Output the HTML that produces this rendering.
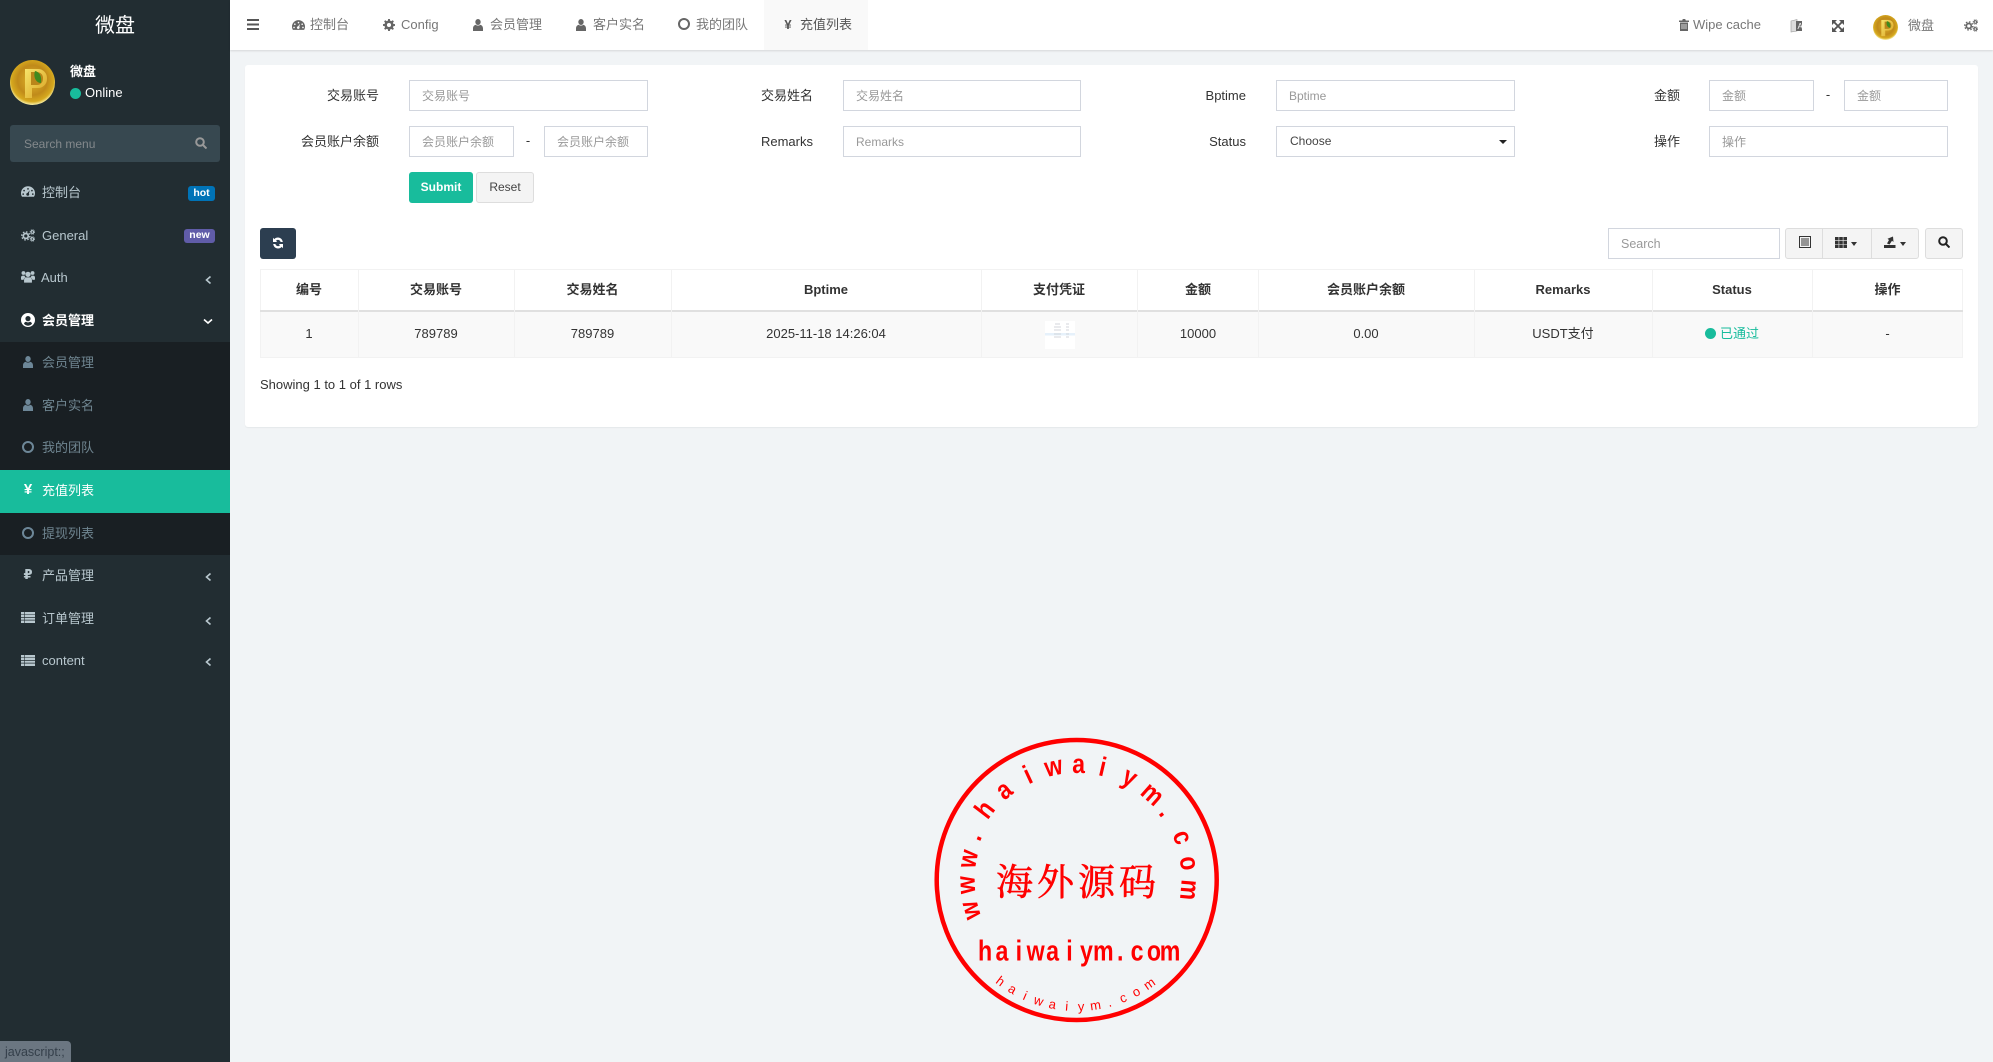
<!DOCTYPE html>
<html lang="zh"><head><meta charset="utf-8"><title>充值列表</title>
<style>
html,body{margin:0;padding:0;width:1993px;height:1062px;overflow:hidden;background:#f1f4f6;font:13px "Liberation Sans","Noto Sans CJK SC",sans-serif;color:#333}
.a,.t,.i,input{position:absolute;box-sizing:border-box}
.t{white-space:nowrap;line-height:20px;height:20px;margin-top:1px}
.c{text-align:center}.r{text-align:right}
.i{fill:currentColor;overflow:visible}
.side{left:0;top:0;width:230px;height:1062px;background:#222d32}
.m{color:#b8c7ce}.s{color:#6f8590}
.inp{border:1px solid #d2d6de;background:#fff;height:31px;color:#999;font-size:12px;line-height:30px;padding-left:12px;white-space:nowrap;overflow:hidden}
.nav{color:#777;margin-top:0}
.th{font-weight:bold;color:#333}
.td{color:#333}
.vl{width:1px;background:#f2f2f2}
.chev{fill:none;stroke:#b8c7ce;stroke-width:1.6;position:absolute}
</style></head><body>
<svg width="0" height="0" style="position:absolute">
<defs>
<radialGradient id="coin" cx="50%" cy="45%" r="55%"><stop offset="0" stop-color="#e0b52c"/><stop offset=".6" stop-color="#c08a1a"/><stop offset=".86" stop-color="#d6a91e"/><stop offset="1" stop-color="#fbf3ae"/></radialGradient>
<linearGradient id="pg" x1="0" y1="0" x2="1" y2="1"><stop offset="0" stop-color="#f6e36a"/><stop offset="1" stop-color="#d9a322"/></linearGradient>
<symbol id="av" viewBox="0 0 45 45"><circle cx="22.5" cy="22.5" r="22.5" fill="url(#coin)"/><path d="M15 9h13a9 9 0 0 1 9 9v1a9 9 0 0 1-9 9h-6v10h-7z" fill="url(#pg)"/><path d="M21 12h6a6 6 0 0 1 6 6v1a6 6 0 0 1-6 6h-6z" fill="#b9861a"/><path d="M25 11c5 1 7 6 6 12-5 0-8-6-6-12z" fill="#3f8a1e"/></symbol>
<symbol id="dash" viewBox="0 0 16 14"><path fill-rule="evenodd" d="M8 1a8 8 0 0 1 8 8c0 1.6-.4 3-1.2 4H1.200C.4 12 0 10.600 0 9a8 8 0 0 1 8-8zM8 3a1 1 0 1 0 0 2 1 1 0 0 0 0-2zM3.500 5a1 1 0 1 0 0 2 1 1 0 0 0 0-2zM12.500 5a1 1 0 1 0 0 2 1 1 0 0 0 0-2zM2.500 9a1 1 0 1 0 0 2 1 1 0 0 0 0-2zM13.500 9a1 1 0 1 0 0 2 1 1 0 0 0 0-2zM10 5.500 7.500 8.500a1.700 1.700 0 1 0 1.500.6z"/></symbol>
<symbol id="cogs" viewBox="0 0 16 14" fill="none" stroke="currentColor"><circle cx="5.500" cy="7.500" r="2.800" stroke-width="1.900"/><circle cx="5.500" cy="7.500" r="4.600" stroke-width="1.600" stroke-dasharray="1.800 1.810"/><circle cx="13" cy="3" r="1.500" stroke-width="1.200"/><circle cx="13" cy="3" r="2.600" stroke-width="1" stroke-dasharray="1 1.040"/><circle cx="13" cy="11" r="1.500" stroke-width="1.200"/><circle cx="13" cy="11" r="2.600" stroke-width="1" stroke-dasharray="1 1.040"/></symbol>
<symbol id="cog" viewBox="0 0 14 14"><path fill-rule="evenodd" d="M6 0h2l.4 2 1.300.5L11.400 1.400l1.300 1.300-1.100 1.700.5 1.300 2 .3v2l-2 .4-.5 1.300 1.100 1.700-1.300 1.300-1.700-1.100-1.300.5L8 14H6l-.4-2-1.300-.5-1.700 1.100-1.300-1.300 1.100-1.700-.5-1.300L-.1 8V6l2-.3.5-1.300L1.300 2.700l1.300-1.300 1.700 1.100L5.600 2zM7 4.600a2.400 2.400 0 1 0 0 4.800 2.400 2.400 0 0 0 0-4.800z"/></symbol>
<symbol id="users" viewBox="0 0 16 14"><circle cx="8" cy="4.500" r="3"/><circle cx="2.800" cy="3" r="2.200"/><circle cx="13.200" cy="3" r="2.200"/><path d="M3.500 14v-3c0-2 1.500-3 3-3h3c1.500 0 3 1 3 3v3z"/><path d="M0 10.500V8c0-1.200 1-2 2-2h2c.3 1 .9 1.600 1.500 2-1.500.4-2.500 1.500-2.700 3zM16 10.500V8c0-1.200-1-2-2-2h-2c-.3 1-.9 1.600-1.500 2 1.500.4 2.500 1.500 2.700 3z"/></symbol>
<symbol id="uc" viewBox="0 0 14 14"><path fill-rule="evenodd" d="M7 0a7 7 0 1 1 0 14A7 7 0 0 1 7 0zM7 3a2.600 2.600 0 1 0 0 5.200A2.600 2.600 0 0 0 7 3zM3 10.800c.900 1.200 2.300 1.900 4 1.900s3.100-.7 4-1.900c-.3-1.300-1.300-2-2.200-2-.5.400-1.100.6-1.800.6s-1.300-.2-1.800-.6c-.9 0-1.900.7-2.200 2z"/></symbol>
<symbol id="user" viewBox="0 0 10 12"><ellipse cx="5" cy="3" rx="2.700" ry="3"/><path d="M0 12V9.500C0 7.500 1.200 6.200 2.600 5.800c.6.500 1.500.8 2.400.8s1.800-.3 2.400-.8C8.800 6.200 10 7.500 10 9.500V12z"/></symbol>
<symbol id="list" viewBox="0 0 14 11"><path d="M0 0h14v2.500H0zM0 3h14v2H0zM0 5.800h14v2H0zM0 8.500h14V11H0z"/><path d="M3 0h.6v11H3z" fill="#222d32"/></symbol>
<symbol id="refresh" viewBox="0 0 12 12"><path d="M10.800 5H8.600C8.300 3.700 7.300 2.900 6 2.900c-.8 0-1.500.3-2 .9l1.200 1.200H1V.8l1.300 1.300A5.200 5.200 0 0 1 6 .5c2.500 0 4.400 1.900 4.800 4.500zM1.200 7h2.200c.3 1.300 1.300 2.100 2.600 2.100.8 0 1.500-.3 2-.9L6.800 7H11v4.200L9.700 9.900A5.200 5.200 0 0 1 6 11.500C3.500 11.500 1.600 9.600 1.200 7z"/></symbol>
</defs></svg>

<!-- sidebar -->
<div class="a side"></div>
<div class="t c" style="left:0;top:13px;width:230px;height:24px;line-height:24px;font-size:20px;color:#fff">微盘</div>
<svg class="i" style="left:10px;top:60px" width="45" height="45"><use href="#av"/></svg>
<div class="t" style="left:70px;top:61px;color:#fff;font-weight:bold">微盘</div>
<div class="a" style="left:70px;top:88px;width:11px;height:11px;border-radius:50%;background:#18bc9c"></div>
<div class="t" style="left:85px;top:82px;color:#fff">Online</div>
<div class="a" style="left:10px;top:125px;width:210px;height:37px;border-radius:3px;background:#374850"></div>
<div class="t" style="left:24px;top:133px;color:#84898c;font-size:12px">Search menu</div>
<svg class="a" style="left:195px;top:137px" width="12" height="12" fill="none" stroke="#999" stroke-width="2"><circle cx="5" cy="5" r="3.800"/><path d="M8 8l3.500 3.500"/></svg>

<svg class="i m" style="left:21px;top:185px" width="14" height="13"><use href="#dash"/></svg>
<div class="t m" style="left:42px;top:182px">控制台</div>
<div class="a" style="left:188px;top:186px;width:27px;height:15px;border-radius:3px;background:#0073b7;color:#fff;font-weight:bold;font-size:10.500px;line-height:14px;text-align:center">hot</div>

<svg class="i m" style="left:21px;top:229px" width="14" height="13"><use href="#cogs"/></svg>
<div class="t m" style="left:42px;top:225px">General</div>
<div class="a" style="left:184px;top:229px;width:31px;height:14px;border-radius:3px;background:#605ca8;color:#fff;font-weight:bold;font-size:10.500px;line-height:13px;text-align:center">new</div>

<svg class="i m" style="left:21px;top:270px" width="14" height="13"><use href="#users"/></svg>
<div class="t m" style="left:41px;top:267px">Auth</div>
<svg class="chev" style="left:205px;top:275px" width="7" height="10"><path d="M5.500 1.500 1.500 5l4 3.500"/></svg>

<svg class="i" style="left:21px;top:313px;color:#fff" width="14" height="14"><use href="#uc"/></svg>
<div class="t" style="left:42px;top:310px;color:#fff;font-weight:bold">会员管理</div>
<svg class="chev" style="left:203px;top:318px;stroke:#fff" width="10" height="7"><path d="M1 1.500 5 5l4-3.500"/></svg>

<div class="a" style="left:0;top:342px;width:230px;height:213px;background:#191f23"></div>
<svg class="i" style="left:23px;top:356px;color:#6d8798" width="10" height="12"><use href="#user"/></svg>
<div class="t s" style="left:42px;top:352px">会员管理</div>
<svg class="i" style="left:23px;top:399px;color:#6d8798" width="10" height="12"><use href="#user"/></svg>
<div class="t s" style="left:42px;top:395px">客户实名</div>
<div class="a" style="left:22px;top:441px;width:12px;height:12px;border:2px solid #6d8798;border-radius:50%"></div>
<div class="t s" style="left:42px;top:437px">我的团队</div>
<div class="a" style="left:0;top:470px;width:230px;height:43px;background:#18bc9c"></div>
<div class="t c" style="left:20px;top:479px;width:16px;color:#fff;font-weight:bold;font-size:15px">¥</div>
<div class="t" style="left:42px;top:480px;color:#fff">充值列表</div>
<div class="a" style="left:22px;top:527px;width:12px;height:12px;border:2px solid #6d8798;border-radius:50%"></div>
<div class="t s" style="left:42px;top:523px">提现列表</div>

<div class="t c m" style="left:20px;top:565px;width:16px;font-weight:bold;font-family:'DejaVu Sans',sans-serif">₽</div>
<div class="t m" style="left:42px;top:565px">产品管理</div>
<svg class="chev" style="left:205px;top:572px" width="7" height="10"><path d="M5.500 1.500 1.500 5l4 3.500"/></svg>
<svg class="i m" style="left:21px;top:612px" width="14" height="11"><use href="#list"/></svg>
<div class="t m" style="left:42px;top:608px">订单管理</div>
<svg class="chev" style="left:205px;top:616px" width="7" height="10"><path d="M5.500 1.500 1.500 5l4 3.500"/></svg>
<svg class="i m" style="left:21px;top:655px" width="14" height="11"><use href="#list"/></svg>
<div class="t m" style="left:42px;top:650px">content</div>
<svg class="chev" style="left:205px;top:657px" width="7" height="10"><path d="M5.500 1.500 1.500 5l4 3.500"/></svg>

<div class="a" style="left:0;top:1041px;width:71px;height:21px;background:#6b7681;border-radius:0 4px 0 0"></div>
<div class="t" style="left:5px;top:1041px;color:#343f4a;font-size:12.500px">javascript:;</div>

<!-- header -->
<div class="a" style="left:230px;top:0;width:1763px;height:50px;background:#fff;box-shadow:0 1px 2px rgba(0,0,0,.12)"></div>
<div class="a" style="left:764px;top:0;width:104px;height:50px;background:#f9f9f9"></div>
<svg class="a" style="left:247px;top:19px" width="12" height="11" fill="#555"><path d="M0 0h12v2H0zM0 4.500h12v2H0zM0 9h12v2H0z"/></svg>
<svg class="i" style="left:292px;top:19px;color:#666" width="13" height="12"><use href="#dash"/></svg>
<div class="t nav" style="left:310px;top:15px">控制台</div>
<svg class="i" style="left:383px;top:19px;color:#666" width="12" height="12"><use href="#cog"/></svg>
<div class="t nav" style="left:401px;top:15px">Config</div>
<svg class="i" style="left:473px;top:19px;color:#666" width="10" height="12"><use href="#user"/></svg>
<div class="t nav" style="left:490px;top:15px">会员管理</div>
<svg class="i" style="left:576px;top:19px;color:#666" width="10" height="12"><use href="#user"/></svg>
<div class="t nav" style="left:593px;top:15px">客户实名</div>
<div class="a" style="left:678px;top:18px;width:12px;height:12px;border:2px solid #666;border-radius:50%"></div>
<div class="t nav" style="left:696px;top:15px">我的团队</div>
<div class="t c" style="left:780px;top:15px;width:16px;color:#555;font-size:13px;font-weight:bold;margin-top:0">¥</div>
<div class="t" style="left:800px;top:15px;color:#555;margin-top:0">充值列表</div>

<svg class="a" style="left:1679px;top:19px" width="10" height="12" fill="#666"><path d="M0 1.500h3.200L3.800 0h2.400l.6 1.500H10V3H0zM1 3.500h8V12H1z"/><path d="M3 5v5M5 5v5M7 5v5" stroke="#fff" stroke-width=".7"/></svg>
<div class="t nav" style="left:1693px;top:15px">Wipe cache</div>
<svg class="a" style="left:1790px;top:19px" width="13" height="14"><path d="M1 2 7 .5V12L1 13z" fill="#ddd" stroke="#999" stroke-width=".6"/><path d="M6 2h6v10H6z" fill="#666"/><text x="7.500" y="10" font-size="8" fill="#fff" font-family="Liberation Sans">A</text></svg>
<svg class="a" style="left:1832px;top:20px" width="12" height="12" fill="#555" stroke="none"><path d="M0 0h5L0 5zM12 0v5L7 0zM0 12V7l5 5zM12 12H7l5-5z"/><path d="M2 2l8 8M10 2l-8 8" stroke="#555" stroke-width="1.900"/></svg>
<svg class="i" style="left:1873px;top:15px" width="25" height="25"><use href="#av"/></svg>
<div class="t nav" style="left:1908px;top:16px">微盘</div>
<svg class="i" style="left:1964px;top:19px;color:#666" width="14" height="13"><use href="#cogs"/></svg>

<!-- panel -->
<div class="a" style="left:245px;top:65px;width:1733px;height:362px;background:#fff;border-radius:3px;box-shadow:0 1px 1px rgba(0,0,0,.05)"></div>

<div class="t r" style="left:279px;top:85px;width:100px">交易账号</div>
<div class="a inp" style="left:409px;top:80px;width:239px">交易账号</div>
<div class="t r" style="left:713px;top:85px;width:100px">交易姓名</div>
<div class="a inp" style="left:843px;top:80px;width:238px">交易姓名</div>
<div class="t r" style="left:1146px;top:85px;width:100px">Bptime</div>
<div class="a inp" style="left:1276px;top:80px;width:239px">Bptime</div>
<div class="t r" style="left:1580px;top:85px;width:100px">金额</div>
<div class="a inp" style="left:1709px;top:80px;width:105px">金额</div>
<div class="t c" style="left:1813px;top:84px;width:30px">-</div>
<div class="a inp" style="left:1844px;top:80px;width:104px">金额</div>

<div class="t r" style="left:279px;top:131px;width:100px">会员账户余额</div>
<div class="a inp" style="left:409px;top:126px;width:105px">会员账户余额</div>
<div class="t c" style="left:513px;top:130px;width:30px">-</div>
<div class="a inp" style="left:544px;top:126px;width:104px">会员账户余额</div>
<div class="t r" style="left:713px;top:131px;width:100px">Remarks</div>
<div class="a inp" style="left:843px;top:126px;width:238px">Remarks</div>
<div class="t r" style="left:1146px;top:131px;width:100px">Status</div>
<div class="a inp" style="left:1276px;top:126px;width:239px;color:#444;padding-left:13px;line-height:29px">Choose</div>
<div class="a" style="left:1499px;top:140px;border:4px solid transparent;border-top:4px solid #222;border-bottom:0"></div>
<div class="t r" style="left:1580px;top:131px;width:100px">操作</div>
<div class="a inp" style="left:1709px;top:126px;width:239px">操作</div>

<div class="a" style="left:409px;top:172px;width:64px;height:31px;background:#18bc9c;border-radius:3px;color:#fff;font-weight:bold;font-size:12px;line-height:30px;text-align:center">Submit</div>
<div class="a" style="left:476px;top:172px;width:58px;height:31px;background:#f4f4f4;border:1px solid #ddd;border-radius:3px;color:#444;font-size:12px;line-height:28px;text-align:center">Reset</div>

<div class="a" style="left:260px;top:228px;width:36px;height:31px;background:#2c3e50;border-radius:3px"></div>
<svg class="i" style="left:272px;top:237px;color:#fff" width="12" height="12"><use href="#refresh"/></svg>

<div class="a inp" style="left:1608px;top:228px;width:172px;height:31px;line-height:30px;font-size:12.500px">Search</div>
<div class="a" style="left:1785px;top:228px;width:134px;height:31px;background:#f4f4f4;border:1px solid #ddd;border-radius:3px"></div>
<div class="a" style="left:1822px;top:228px;width:1px;height:31px;background:#ddd"></div>
<div class="a" style="left:1871px;top:228px;width:1px;height:31px;background:#ddd"></div>
<svg class="a" style="left:1799px;top:236px" width="12" height="12" fill="none" stroke="#333"><path d="M.5.5h11v11H.5z"/><path d="M2 3h8M2 5h8M2 7h8M2 9h8" stroke-width="1.100"/></svg>
<svg class="a" style="left:1835px;top:237px" width="12" height="11" fill="#333"><path d="M0 0h3.600v3.300H0zM4.200 0h3.600v3.300H4.200zM8.400 0H12v3.300H8.400zM0 3.900h3.600v3.300H0zM4.200 3.900h3.600v3.300H4.200zM8.400 3.900H12v3.300H8.400zM0 7.800h3.600V11H0zM4.200 7.800h3.600V11H4.200zM8.400 7.800H12V11H8.400z"/></svg>
<div class="a" style="left:1851px;top:242px;border:3.500px solid transparent;border-top:4px solid #333;border-bottom:0"></div>
<svg class="a" style="left:1884px;top:236px" width="12" height="12" fill="#333"><path d="M0 9h11.500v3H0zM3 7.500 5 4 3.500 2.800 9 .5l.5 5.500L8 4.800 5.500 8.500z"/></svg>
<div class="a" style="left:1900px;top:242px;border:3.500px solid transparent;border-top:4px solid #333;border-bottom:0"></div>
<div class="a" style="left:1925px;top:228px;width:38px;height:31px;background:#f4f4f4;border:1px solid #ddd;border-radius:3px"></div>
<svg class="a" style="left:1938px;top:236px" width="12" height="12" fill="none" stroke="#222" stroke-width="2"><circle cx="5" cy="5" r="3.800"/><path d="M8 8l3.500 3.500"/></svg>

<!-- table -->
<div class="a" style="left:260px;top:269px;width:1703px;height:89px;border:1px solid #f2f2f2"></div>
<div class="a" style="left:261px;top:312px;width:1701px;height:45px;background:#f9f9f9"></div>
<div class="a" style="left:260px;top:310px;width:1703px;height:2px;background:#e0e0e0"></div>
<div class="a vl" style="left:358px;top:269px;height:89px"></div>
<div class="a vl" style="left:514px;top:269px;height:89px"></div>
<div class="a vl" style="left:671px;top:269px;height:89px"></div>
<div class="a vl" style="left:981px;top:269px;height:89px"></div>
<div class="a vl" style="left:1137px;top:269px;height:89px"></div>
<div class="a vl" style="left:1258px;top:269px;height:89px"></div>
<div class="a vl" style="left:1474px;top:269px;height:89px"></div>
<div class="a vl" style="left:1652px;top:269px;height:89px"></div>
<div class="a vl" style="left:1812px;top:269px;height:89px"></div>

<div class="t c th" style="left:260px;top:279px;width:98px">编号</div>
<div class="t c th" style="left:358px;top:279px;width:156px">交易账号</div>
<div class="t c th" style="left:514px;top:279px;width:157px">交易姓名</div>
<div class="t c th" style="left:671px;top:279px;width:310px">Bptime</div>
<div class="t c th" style="left:981px;top:279px;width:156px">支付凭证</div>
<div class="t c th" style="left:1137px;top:279px;width:122px">金额</div>
<div class="t c th" style="left:1258px;top:279px;width:216px">会员账户余额</div>
<div class="t c th" style="left:1474px;top:279px;width:178px">Remarks</div>
<div class="t c th" style="left:1652px;top:279px;width:160px">Status</div>
<div class="t c th" style="left:1812px;top:279px;width:151px">操作</div>

<div class="t c td" style="left:260px;top:323px;width:98px">1</div>
<div class="t c td" style="left:358px;top:323px;width:156px">789789</div>
<div class="t c td" style="left:514px;top:323px;width:157px">789789</div>
<div class="t c td" style="left:671px;top:323px;width:310px">2025-11-18 14:26:04</div>
<svg class="a" style="left:1045px;top:321px" width="30" height="28"><rect width="30" height="28" fill="#fff"/><rect y="12" width="30" height="2.500" fill="#e6f1fb"/><path d="M10 3h5M21 3h3M9 6h7M21 6h3M9 9h7M21 9h3M9 13h7M21 13h3M9 16h7M21 16h3" stroke="#d3d6db" stroke-width="1"/></svg>
<div class="t c td" style="left:1137px;top:323px;width:122px">10000</div>
<div class="t c td" style="left:1258px;top:323px;width:216px">0.00</div>
<div class="t c td" style="left:1474px;top:323px;width:178px">USDT支付</div>
<div class="a" style="left:1705px;top:328px;width:11px;height:11px;border-radius:50%;background:#18bc9c"></div>
<div class="t" style="left:1720px;top:323px;color:#18bc9c">已通过</div>
<div class="t c td" style="left:1812px;top:323px;width:151px">-</div>
<div class="t" style="left:260px;top:374px">Showing 1 to 1 of 1 rows</div>

<!-- stamp -->
<svg class="a" style="left:920px;top:730px" width="310" height="300" fill="#f00">
<circle cx="156.700" cy="150" r="140" fill="none" stroke="#f00" stroke-width="4.500"/>
<g font-family="Liberation Sans" font-weight="bold" font-size="27" text-anchor="middle">
<text transform="rotate(-106 156.700 150) translate(156.700 48) scale(.85 1)">w</text>
<text transform="rotate(-92.600 156.700 150) translate(156.700 48) scale(.85 1)">w</text>
<text transform="rotate(-79 156.700 150) translate(156.700 48) scale(.85 1)">w</text>
<text transform="rotate(-67 156.700 150) translate(156.700 46) scale(.85 1)">.</text>
<text transform="rotate(-52.500 156.700 150) translate(156.700 43) scale(.85 1)">h</text>
<text transform="rotate(-39 156.700 150) translate(156.700 43) scale(.85 1)">a</text>
<text transform="rotate(-25 156.700 150) translate(156.700 43) scale(.85 1)">i</text>
<text transform="rotate(-11.600 156.700 150) translate(156.700 43) scale(.85 1)">w</text>
<text transform="rotate(1 156.700 150) translate(156.700 43) scale(.85 1)">a</text>
<text transform="rotate(13 156.700 150) translate(156.700 43) scale(.85 1)">i</text>
<text transform="rotate(27.300 156.700 150) translate(156.700 43) scale(.85 1)">y</text>
<text transform="rotate(41.400 156.700 150) translate(156.700 44) scale(.85 1)">m</text>
<text transform="rotate(52.500 156.700 150) translate(156.700 45) scale(.85 1)">.</text>
<text transform="rotate(68 156.700 150) translate(156.700 44.500) scale(.85 1)">c</text>
<text transform="rotate(81.500 156.700 150) translate(156.700 45) scale(.85 1)">o</text>
<text transform="rotate(95 156.700 150) translate(156.700 45.500) scale(.85 1)">m</text>
</g>
<text x="76" y="165" font-family="Noto Serif CJK SC" font-size="37" letter-spacing="4" stroke="#f00" stroke-width=".6">海外源码</text>
<text transform="translate(0 230.500) scale(.8 1)" x="81.300 102.400 123.500 144.600 165.800 186.900 208 229.100 250.300 271.400 292.500 312.600" text-anchor="middle" font-family="Liberation Sans" font-weight="bold" font-size="29">haiwaiym.com</text>
<g font-family="Liberation Sans" font-size="13" text-anchor="middle">
<text x="156.700" y="281" transform="rotate(37 156.700 150)">h</text>
<text x="156.700" y="281" transform="rotate(30.500 156.700 150)">a</text>
<text x="156.700" y="281" transform="rotate(24 156.700 150)">i</text>
<text x="156.700" y="281" transform="rotate(17.500 156.700 150)">w</text>
<text x="156.700" y="281" transform="rotate(11 156.700 150)">a</text>
<text x="156.700" y="281" transform="rotate(4.500 156.700 150)">i</text>
<text x="156.700" y="281" transform="rotate(-2 156.700 150)">y</text>
<text x="156.700" y="281" transform="rotate(-8.500 156.700 150)">m</text>
<text x="156.700" y="281" transform="rotate(-15 156.700 150)">.</text>
<text x="156.700" y="281" transform="rotate(-21.500 156.700 150)">c</text>
<text x="156.700" y="281" transform="rotate(-28 156.700 150)">o</text>
<text x="156.700" y="281" transform="rotate(-35 156.700 150)">m</text>
</g>
</svg>
</body></html>
